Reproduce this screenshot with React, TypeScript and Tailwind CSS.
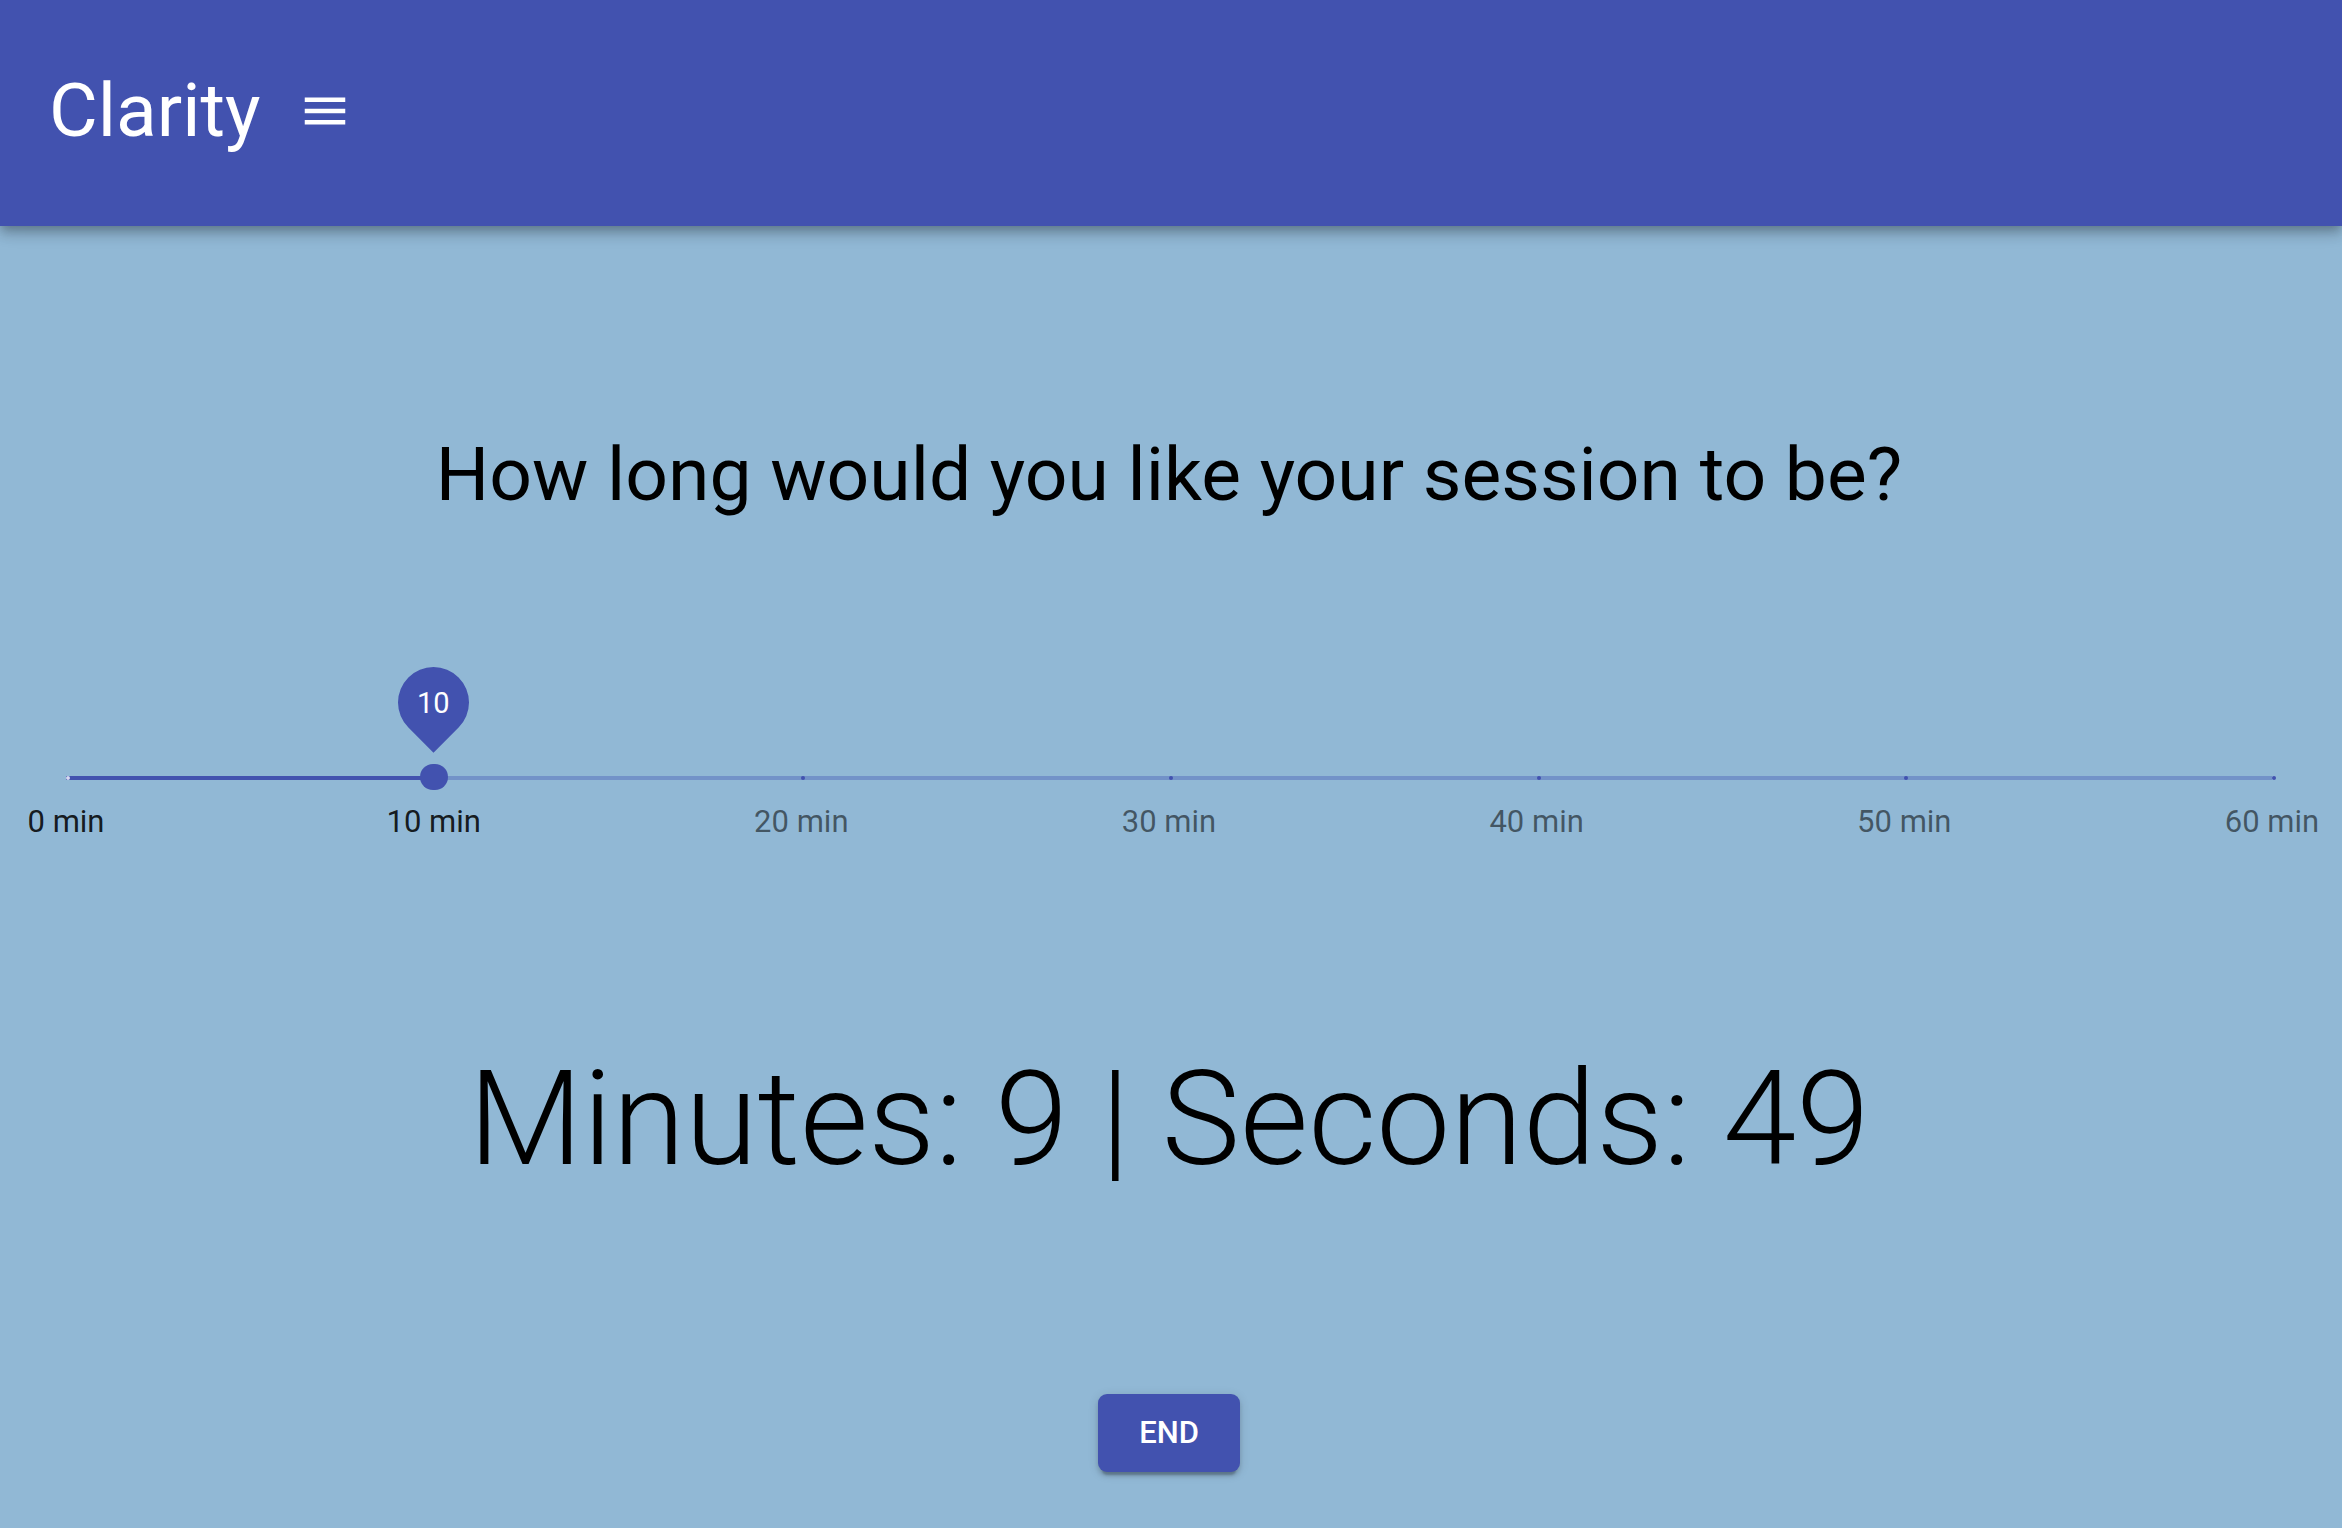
import { useState } from "react";

const MAX_MINUTES = 60;
const MARKS = [0, 10, 20, 30, 40, 50, 60];

function Header() {
  return (
    <header className="relative flex h-[226px] items-start bg-[#4252af] px-[49px] pt-[66px] text-white shadow-[0_4px_9px_-2px_rgba(0,0,0,0.2),0_9px_11px_0_rgba(0,0,0,0.14),0_2px_22px_0_rgba(0,0,0,0.12)]">
      <div className="flex items-start gap-[37px]">
        <h1 className="text-[75px] leading-[88px]">Clarity</h1>
        <button type="button" aria-label="Open menu" className="mt-[18px]">
          <svg viewBox="0 0 24 24" className="size-[54px] fill-current" aria-hidden="true">
            <path d="M3 18h18v-2H3v2zm0-5h18v-2H3v2zm0-7v2h18V6H3z" />
          </svg>
        </button>
      </div>
    </header>
  );
}

function SessionSlider({ value, onChange }: { value: number; onChange: (value: number) => void }) {
  const percent = `${(value / MAX_MINUTES) * 100}%`;
  return (
    <div className="relative mr-[66px] ml-[66px]">
      <div className="relative h-1 bg-[#7292c8]">
        <div className="h-1 bg-[#4252af]" style={{ width: percent }} />
        <div className="absolute inset-0 flex justify-between">
          {MARKS.map((mark) => (
            <div key={mark} className="w-0">
              <div className={mark < value ? "size-1 rounded-full bg-[#d6d9f0]" : "size-1 rounded-full bg-[#4252af]"} />
            </div>
          ))}
        </div>
        <div className="absolute -top-3 flex w-0 justify-center" style={{ left: percent }}>
          <div className="h-[26px] w-7 shrink-0 rounded-[13px] bg-[#4252af]" />
        </div>
        <div className="absolute bottom-[42px] flex w-0 justify-center" style={{ left: percent }}>
          <div className="flex size-[71px] shrink-0 -rotate-45 items-center justify-center rounded-[50%_50%_50%_0] bg-[#4252af]">
            <output htmlFor="session-length" className="rotate-45 pt-0.5 text-[29px] leading-none text-white">
              {value}
            </output>
          </div>
        </div>
      </div>
      <div className="mt-5 flex justify-between text-[31px] leading-[44px]">
        {MARKS.map((mark) => (
          <div key={mark} className="flex w-0 justify-center whitespace-nowrap">
            <span className={mark <= value ? "text-black/87" : "text-black/54"}>{mark} min</span>
          </div>
        ))}
      </div>
      <input
        id="session-length"
        type="range"
        min={0}
        max={MAX_MINUTES}
        step={10}
        value={value}
        aria-labelledby="session-question"
        onChange={(event) => onChange(Number(event.target.value))}
        className="absolute inset-x-0 -top-7 h-14 w-full cursor-pointer opacity-0"
      />
    </div>
  );
}

export default function App() {
  const [length, setLength] = useState(10);
  return (
    <div className="min-h-screen bg-[#91b8d5] font-[Roboto,sans-serif] text-black">
      <Header />
      <main className="flex flex-col pr-1">
        <h2 id="session-question" className="mt-[203px] text-center text-[75px] leading-[90px]">
          How long would you like your session to be?
        </h2>
        <div className="mt-[257px]">
          <SessionSlider value={length} onChange={setLength} />
        </div>
        <p className="mt-[196px] text-center text-[132px] leading-[158px] font-light">Minutes: 9 | Seconds: 49</p>
        <button
          type="button"
          className="mx-auto mt-[196px] h-[78px] rounded-[9px] bg-[#4252af] px-[41px] text-[31px] font-medium text-white shadow-[0_7px_2px_-4px_rgba(0,0,0,0.2),0_4px_4px_0_rgba(0,0,0,0.14),0_2px_11px_0_rgba(0,0,0,0.12)]"
        >
          END
        </button>
      </main>
    </div>
  );
}
